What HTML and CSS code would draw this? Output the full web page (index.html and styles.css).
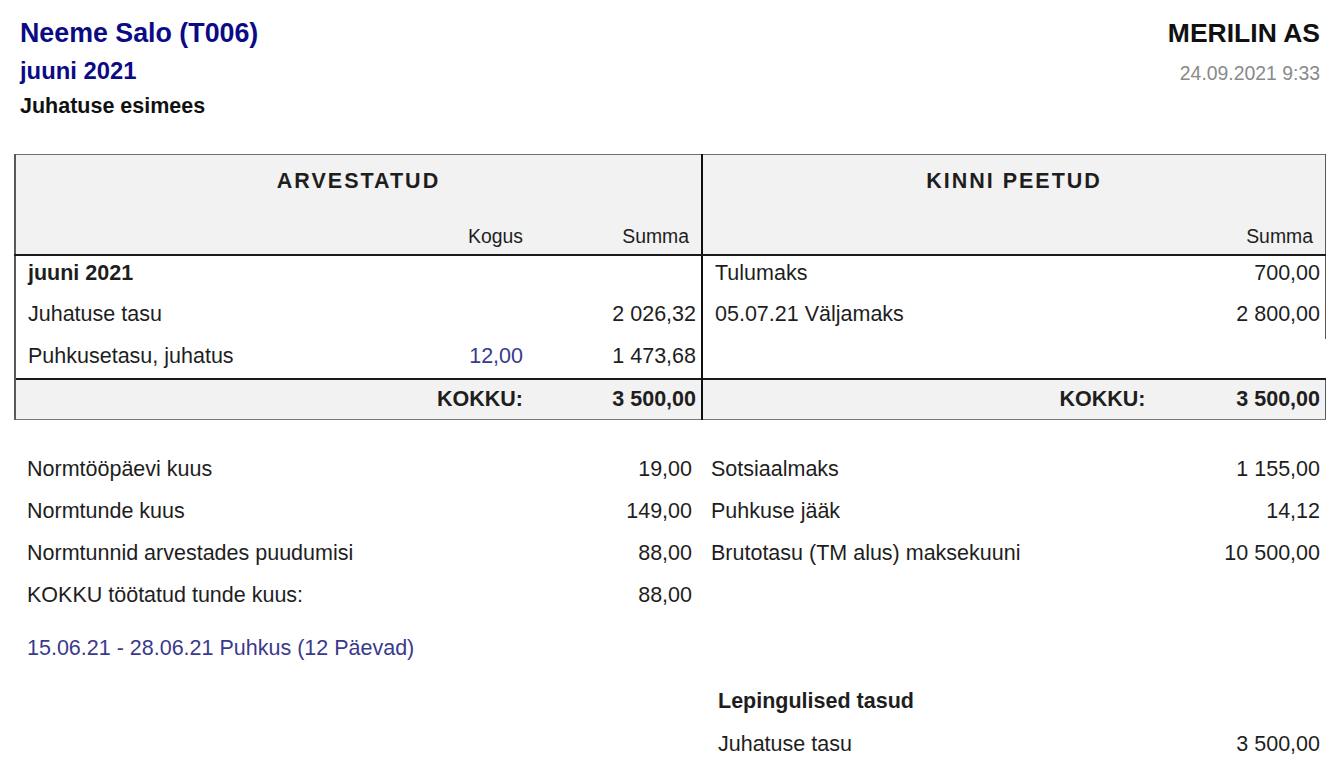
FILE: index.html
```html
<!DOCTYPE html>
<html lang="et">
<head>
  <meta charset="UTF-8">
  <meta name="viewport" content="width=device-width, initial-scale=1.0">
  <title>Palgaleht - Neeme Salo</title>
  <link rel="stylesheet" href="styles.css">
</head>
<body>
  <div class="sheet">
    <header class="sheet-head">
      <div class="person">
        <h1 class="person-name">Neeme Salo (T006)</h1>
        <div class="period">juuni 2021</div>
        <div class="position">Juhatuse esimees</div>
      </div>
      <div class="company">
        <div class="company-name">MERILIN AS</div>
        <div class="printed">24.09.2021 9:33</div>
      </div>
    </header>

    <table class="pay-table">
      <colgroup>
        <col class="c-label">
        <col class="c-qty">
        <col class="c-sum">
        <col class="c-rlabel">
        <col class="c-rsum">
      </colgroup>
      <thead>
        <tr class="title-row">
          <th colspan="3" class="left-half">ARVESTATUD</th>
          <th colspan="2" class="right-half">KINNI PEETUD</th>
        </tr>
        <tr class="sub-row">
          <th class="first"></th>
          <th class="num">Kogus</th>
          <th class="num split">Summa</th>
          <th></th>
          <th class="num last">Summa</th>
        </tr>
      </thead>
      <tbody>
        <tr>
          <td class="first"><b>juuni 2021</b></td>
          <td></td>
          <td class="split"></td>
          <td>Tulumaks</td>
          <td class="num last">700,00</td>
        </tr>
        <tr>
          <td class="first">Juhatuse tasu</td>
          <td></td>
          <td class="num split">2 026,32</td>
          <td>05.07.21 Väljamaks</td>
          <td class="num last">2 800,00</td>
        </tr>
        <tr class="row-last">
          <td class="first">Puhkusetasu, juhatus</td>
          <td class="num qty">12,00</td>
          <td class="num split">1 473,68</td>
          <td></td>
          <td></td>
        </tr>
      </tbody>
      <tfoot>
        <tr>
          <td class="first"></td>
          <td class="num">KOKKU:</td>
          <td class="num split">3 500,00</td>
          <td class="num">KOKKU:</td>
          <td class="num last">3 500,00</td>
        </tr>
      </tfoot>
    </table>

    <section class="stats">
      <div class="stat-list">
        <div class="stat"><span>Normtööpäevi kuus</span><span>19,00</span></div>
        <div class="stat"><span>Normtunde kuus</span><span>149,00</span></div>
        <div class="stat"><span>Normtunnid arvestades puudumisi</span><span>88,00</span></div>
        <div class="stat"><span>KOKKU töötatud tunde kuus:</span><span>88,00</span></div>
      </div>
      <div class="stat-list right">
        <div class="stat"><span>Sotsiaalmaks</span><span>1 155,00</span></div>
        <div class="stat"><span>Puhkuse jääk</span><span>14,12</span></div>
        <div class="stat"><span>Brutotasu (TM alus) maksekuuni</span><span>10 500,00</span></div>
      </div>
    </section>

    <p class="absence">15.06.21 - 28.06.21 Puhkus (12 Päevad)</p>

    <section class="contract">
      <h2 class="contract-title">Lepingulised tasud</h2>
      <div class="stat"><span>Juhatuse tasu</span><span>3 500,00</span></div>
    </section>
  </div>
</body>
</html>
```

FILE: styles.css
```css
body {
    margin: 0;
    font-family: "Liberation Sans", Arial, sans-serif;
    color: #1e1e1e;
    background: white;
}

.sheet {
    padding: 0 16px 0 14px;
}

/* page head */
.sheet-head {
    display: flex;
    justify-content: space-between;
    padding-top: 16px;
}

.person {
    padding-left: 6px;
    color: #0b0b86;
}

.person-name {
    margin: 0;
    font-size: 26.8px;
    line-height: 34px;
}

.period {
    margin-top: 6px;
    font-size: 23.8px;
    font-weight: bold;
    line-height: 30px;
}

.position {
    margin-top: 7px;
    font-size: 21.5px;
    font-weight: bold;
    line-height: 26px;
    color: #111;
}

.company {
    text-align: right;
    padding-right: 6px;
}

.company-name {
    font-size: 26.5px;
    font-weight: bold;
    line-height: 34px;
    color: #111;
}

.printed {
    margin-top: 11px;
    font-size: 19.4px;
    line-height: 24px;
    color: #8a8a8a;
}

/* main table */
.pay-table {
    width: 100%;
    margin-top: 35px;
    border-collapse: collapse;
    table-layout: fixed;
    font-size: 21.5px;
}

.c-label { width: 385px; }
.c-qty { width: 135px; }
.c-sum { width: 167px; }
.c-rsum { width: 166px; }

.pay-table th,
.pay-table td {
    padding: 0 12px;
    text-align: left;
    white-space: nowrap;
}

.pay-table .num {
    text-align: right;
}

.pay-table thead th {
    background: #f2f2f2;
    font-weight: normal;
}

.title-row th {
    height: 52px;
    font-size: 21.5px;
    font-weight: bold !important;
    letter-spacing: 2px;
    text-align: center !important;
    border-top: 1px solid #6e6e6e;
}

.title-row .left-half {
    border-left: 2px solid #5a5a5a;
    border-right: 2px solid #111;
}

.title-row .right-half {
    border-right: 1px solid #5a5a5a;
}

.sub-row th {
    height: 41px;
    vertical-align: bottom;
    padding-bottom: 6px;
    font-size: 19.4px;
    border-bottom: 2px solid #1a1a1a;
}

.pay-table .sub-row .split,
.pay-table .sub-row .last {
    padding-right: 12px;
}

.pay-table .first {
    border-left: 2px solid #5a5a5a;
}

.pay-table .split {
    border-right: 2px solid #111;
    padding-right: 5px;
}

.pay-table .last {
    border-right: 1px solid #5a5a5a;
    padding-right: 5px;
}

.pay-table tbody td {
    height: 42px;
    vertical-align: top;
    padding-top: 5px;
    line-height: 24px;
    box-sizing: border-box;
}

.pay-table tbody .row-last td {
    height: 40px;
}

.qty {
    color: #3a3a8c;
}

.pay-table tfoot td {
    height: 39px;
    background: #f2f2f2;
    font-weight: bold;
    border-top: 2px solid #1a1a1a;
    border-bottom: 1px solid #7a7a7a;
}

.pay-table tfoot td:nth-child(4) {
    padding-right: 14px;
}

/* summary rows below */
.stats {
    display: grid;
    grid-template-columns: 687px 1fr;
    margin-top: 28px;
}

.stat {
    display: flex;
    justify-content: space-between;
    height: 42px;
    align-items: center;
    font-size: 21.5px;
}

.stat-list .stat {
    padding: 0 9px 0 13px;
}

.stat-list.right .stat {
    padding: 0 6px 0 10px;
}

.absence {
    margin: 11px 0 0;
    padding-left: 13px;
    height: 42px;
    line-height: 42px;
    font-size: 21.5px;
    color: #3a3a8c;
}

.contract {
    margin: 11px 0 0 704px;
}

.contract-title {
    margin: 0;
    height: 43px;
    line-height: 42px;
    font-size: 21.5px;
}

.contract .stat {
    padding-right: 6px;
}
```
